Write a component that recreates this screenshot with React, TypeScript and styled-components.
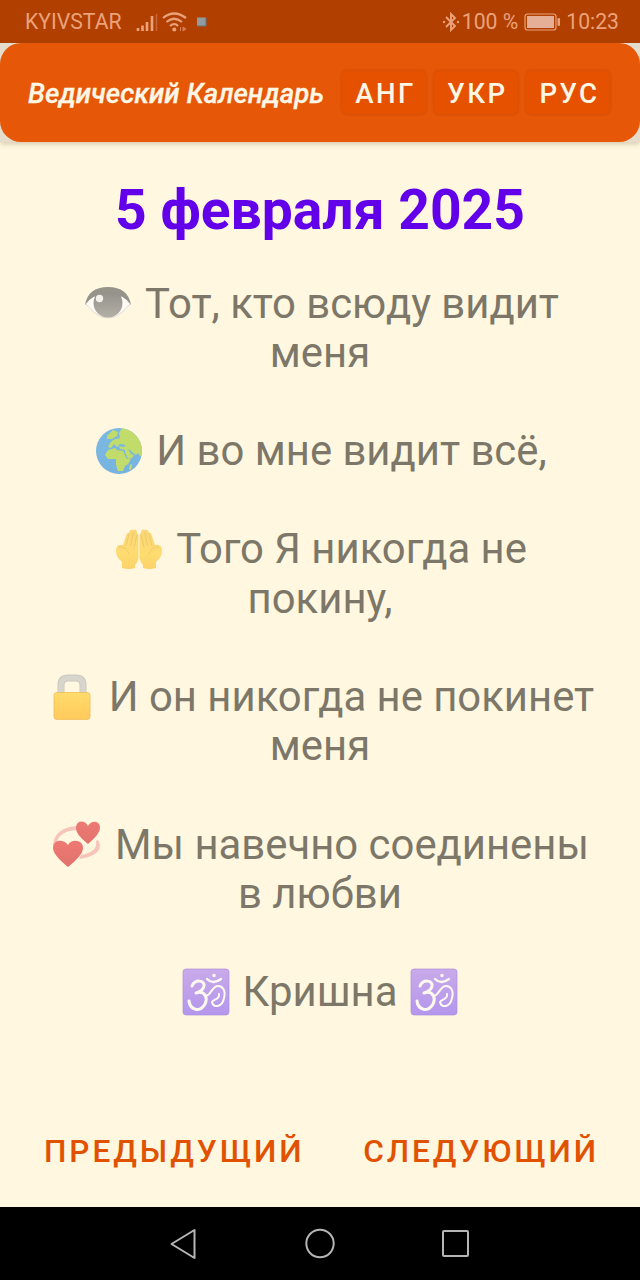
import React from "react";
import styled, { createGlobalStyle } from "styled-components";

const GlobalStyle = createGlobalStyle`
  * { box-sizing: border-box; }
  body { margin: 0; background: #fff7e0; }
  svg { display: block; flex: none; }
`;

const Screen = styled.div`
  width: 640px;
  height: 1280px;
  display: flex;
  flex-direction: column;
  overflow: hidden;
  background: #fff7e0;
  font-family: Roboto, sans-serif;
`;

const StatusBar = styled.div`
  height: 43px;
  flex: none;
  display: flex;
  align-items: center;
  padding: 0 21px 0 25px;
  background: #b03f00;
  color: #eba27c;
  font-size: 21.2px;
`;

const StatusText = styled.span<{ $left?: number }>`
  margin-left: ${(p) => p.$left ?? 0}px;
  white-space: pre;
`;

const StatusIcon = styled.svg<{ $left?: number }>`
  margin-left: ${(p) => p.$left ?? 0}px;
`;

const Spacer = styled.div`
  flex: 1;
`;

const HeaderWrap = styled.div`
  height: 99px;
  flex: none;
  background: #e6dccb;
  box-shadow: 0 2px 5px rgba(110, 90, 50, 0.28);
`;

const Header = styled.header`
  height: 99px;
  display: flex;
  align-items: center;
  padding: 0 28px;
  border-radius: 21px;
  background: #e65708;
`;

const Title = styled.h1`
  margin: 2px 0 0;
  width: 314px;
  flex: none;
  color: #fff7e6;
  font-size: 27.65px;
  font-weight: 500;
  font-style: italic;
  -webkit-text-stroke: 0.3px #fff7e6;
  white-space: nowrap;
`;

const Languages = styled.div`
  display: flex;
  gap: 8px;
`;

const LanguageButton = styled.button`
  width: 84px;
  height: 43px;
  padding: 2px 0 0 3px;
  border: 0;
  border-radius: 5px;
  background: #e65100;
  box-shadow: 0 0 3px rgba(150, 45, 0, 0.4);
  color: #fff7e6;
  font: 500 27.6px Roboto, sans-serif;
  letter-spacing: 2.5px;
`;

const Content = styled.main`
  flex: 1;
  display: flex;
  flex-direction: column;
`;

const DateHeading = styled.h2`
  margin: 35px 0 0;
  height: 66px;
  line-height: 66px;
  text-align: center;
  color: #6200ea;
  font-size: 55.2px;
  font-weight: 700;
`;

const Verses = styled.div`
  margin-top: 35.5px;
  display: flex;
  flex-direction: column;
  gap: 49.2px;
`;

const Verse = styled.div`
  display: flex;
  flex-direction: column;
`;

const Line = styled.div<{ $shift?: number }>`
  height: 49.2px;
  display: flex;
  align-items: center;
  justify-content: center;
  gap: 13px;
  padding-left: ${(p) => p.$shift ?? 0}px;
  color: #7c7768;
  font-size: 41.85px;
  line-height: 49.2px;
  white-space: nowrap;
`;

const Words = styled.span``;

const Pager = styled.nav`
  margin-top: auto;
  height: 112px;
  display: flex;
  justify-content: space-between;
  padding: 0 41px 0 44px;
`;

const PagerButton = styled.button`
  padding: 0;
  border: 0;
  background: none;
  color: #e15200;
  font: 500 31.6px Roboto, sans-serif;
  letter-spacing: 2.9px;
`;

const NavigationBar = styled.footer`
  height: 73px;
  flex: none;
  display: flex;
  align-items: center;
  justify-content: center;
  gap: 106px;
  background: #000;
`;

const Eye = () => (
  <svg width="48" height="48" viewBox="0 0 48 48">
    <defs>
      <linearGradient id="iris" x1="0" y1="0" x2="0" y2="1">
        <stop offset="0" stopColor="#8f8d86" />
        <stop offset="1" stopColor="#b3b0a7" />
      </linearGradient>
    </defs>
    <path d="M1 25Q11 9 24 9T47 25Q37 39 24 39T1 25Z" fill="#fffdf6" />
    <path d="M2 25Q13 39 24 39T46 25" fill="none" stroke="#dedacd" />
    <circle cx="24" cy="24" r="14.500" fill="url(#iris)" />
    <path d="M1 26Q4 8 24 8T47 26Q40 15 24 15T1 26Z" fill="#96938b" />
    <circle cx="15.500" cy="19.500" r="3.700" fill="#f3f1e9" />
  </svg>
);

const Globe = () => (
  <svg width="48" height="48" viewBox="0 0 48 48">
    <defs>
      <linearGradient id="sea" x1="0" y1="0" x2="0" y2="1">
        <stop offset="0" stopColor="#7cb9e2" />
        <stop offset="1" stopColor="#76b3de" />
      </linearGradient>
      <clipPath id="disc"><circle cx="24" cy="24" r="23" /></clipPath>
    </defs>
    <circle cx="24" cy="24" r="23" fill="url(#sea)" />
    <g clipPath="url(#disc)" fill="#c2dc6b">
      <path d="M24 6L27 1L36 2L44 10L48 20V28L45 29L43 26L41 28L38 26L35 23L33 22L36 27L39 28L37 31L33 32L30 25L30 23L25 22L24 19L29 20L31 18L25 17L22 20L19 17L16 21L13 20L15 16L18 13L21 12L25 11Z" />
      <path d="M12 9L18 3L23 5L22 9L17 12L12 12Z" />
      <path d="M13 23L20 21L22 23L28 24L32 32H36L33 37L30 39L28 44H23L21 38L21 32L13 32L10 28Z" />
      <path d="M35 38l2-1-1 6-2-1Z" />
    </g>
  </svg>
);

const Palms = () => (
  <svg width="48" height="48" viewBox="0 0 48 48">
    <defs>
      <linearGradient id="skin" x1="0" y1="0" x2="0" y2="1">
        <stop offset="0" stopColor="#f9d678" />
        <stop offset=".6" stopColor="#ffdc70" />
        <stop offset="1" stopColor="#fad269" />
      </linearGradient>
      <g id="palm">
        <path d="M7 43V37Q1 32 1 26Q1 20 5 20L8 20L11 11Q12 7 14 8Q15 4 18 5Q22 3 22 8Q24 9 23.500 15V33Q23 37 20 40V43Q13 45 7 43Z" fill="url(#skin)" />
        <path d="M14 9L11 21M18.500 7L15.500 21M22 10L19 22M4 22Q11 21 14 29" fill="none" stroke="#edc767" strokeWidth=".9" />
      </g>
    </defs>
    <use href="#palm" />
    <use href="#palm" transform="matrix(-1 0 0 1 48 0)" />
  </svg>
);

const Lock = () => (
  <svg width="48" height="48" viewBox="0 0 48 48">
    <defs>
      <linearGradient id="brass" x1="0" y1="0" x2="0" y2="1">
        <stop offset="0" stopColor="#ffdc6c" />
        <stop offset="1" stopColor="#ffc95b" />
      </linearGradient>
    </defs>
    <path d="M13 21V12Q13 5 20 5H28Q35 5 35 12V21" fill="none" stroke="#cbc8c0" strokeWidth="7" />
    <path d="M13 21V12Q13 5 20 5H28Q35 5 35 12V21" fill="none" stroke="#d8d5cc" strokeWidth="5" />
    <rect x="6" y="19.500" width="36" height="27" rx="3" fill="url(#brass)" stroke="#f0bf5a" strokeWidth=".8" />
  </svg>
);

const Hearts = () => (
  <svg width="50" height="48" viewBox="0 0 50 48">
    <defs>
      <linearGradient id="heart" x1="0" y1="0" x2="0" y2="1">
        <stop offset="0" stopColor="#ee7972" />
        <stop offset="1" stopColor="#e0736d" />
      </linearGradient>
    </defs>
    <path d="M1 25C2 13 11 7 25 6V10C12 11 6 15 5 23ZM46 20Q51 28 43 34Q36 38 27 39L29 35Q46 32 44 21Z" fill="#f6c4b9" />
    <path d="M36 24Q23 14 24 7C25 0 33 0 36 6C39 0 48 0 48 8Q48 14 36 24Z" fill="url(#heart)" />
    <path d="M16 47Q1 35 1 28C1 19 12 19 16 25C20 18 32 20 31 29Q30 36 16 47Z" fill="url(#heart)" />
  </svg>
);

const Om = () => (
  <svg width="48" height="48" viewBox="0 0 48 48">
    <defs>
      <linearGradient id="violet" x1="0" y1="0" x2="0" y2="1">
        <stop offset="0" stopColor="#c9aae9" />
        <stop offset="1" stopColor="#b496ed" />
      </linearGradient>
    </defs>
    <rect x="1" y="1" width="46" height="46" rx="3" fill="url(#violet)" stroke="#ad91dc" strokeWidth=".7" />
    <g fill="none" stroke="#fffaf0" strokeLinecap="round" strokeLinejoin="round">
      <path d="M10 18C13 11 23 12 22 18Q21 23 14 25C23 22 26 30 23 36C18 45 8 42 7 33" strokeWidth="3" />
      <path d="M22 27C29 30 29 18 36 18C41 18 44 23 42 30C40 40 31 40 30 34C31 31 38 32 37 26" strokeWidth="2" />
      <path d="M25 11Q31 17 39 11" strokeWidth="2.300" />
      <circle cx="32" cy="7.500" r="1" fill="#fffaf0" strokeWidth="1.500" />
    </g>
  </svg>
);

export default function App() {
  return (
    <Screen>
      <GlobalStyle />
      <StatusBar>
        <StatusText>KYIVSTAR</StatusText>
        <StatusIcon $left={14} width="76" height="24" viewBox="0 0 76 24">
          <path d="M2 18v3M6.500 15.500v5.500M11 12v9M16 6v15" stroke="#eba27c" strokeWidth="2.600" />
          <path d="M20.500 4v17" stroke="#c96537" strokeWidth="1.500" />
          <g fill="none" stroke="#eba27c" strokeWidth="2.200">
            <path d="M27 8Q38-1 50 8M30.500 12Q38 5.500 46 12M34 16Q38.500 12 42 16" />
          </g>
          <circle cx="38.300" cy="19.500" r="2" fill="#eba27c" />
          <path d="M44.500 17v4M47 17l3 2-3 2z" stroke="#d87d52" fill="#d87d52" />
          <rect x="61" y="7.500" width="9" height="8.500" fill="#929ba1" />
          <path d="M61 16h9V8" fill="none" stroke="#65727b" />
        </StatusIcon>
        <Spacer />
        <StatusIcon width="18" height="22" viewBox="0 0 18 22">
          <path d="M4 6L13 15 9 19V3L13 7 4 16" fill="none" stroke="#eba27c" strokeWidth="1.900" />
          <circle cx="2" cy="11" r="1.200" fill="#eba27c" />
          <circle cx="16" cy="11" r="1.200" fill="#eba27c" />
        </StatusIcon>
        <StatusText $left={2}>100 %</StatusText>
        <StatusIcon $left={6} width="36" height="18" viewBox="0 0 36 18">
          <rect x="1" y="1" width="31" height="16" rx="2.500" fill="none" stroke="#eba27c" strokeWidth="1.200" />
          <rect x="3" y="3" width="27" height="12" fill="#e4af96" />
          <rect x="33.500" y="5" width="2.500" height="8" rx="1" fill="#eba27c" />
        </StatusIcon>
        <StatusText $left={6}>10:23</StatusText>
      </StatusBar>
      <HeaderWrap>
        <Header>
          <Title>Ведический Календарь</Title>
          <Languages>
            <LanguageButton>АНГ</LanguageButton>
            <LanguageButton>УКР</LanguageButton>
            <LanguageButton>РУС</LanguageButton>
          </Languages>
        </Header>
      </HeaderWrap>
      <Content>
        <DateHeading>5 февраля 2025</DateHeading>
        <Verses>
          <Verse>
            <Line $shift={3}><Eye /><Words>Тот, кто всюду видит</Words></Line>
            <Line><Words>меня</Words></Line>
          </Verse>
          <Verse>
            <Line $shift={2}><Globe /><Words>И во мне видит всё,</Words></Line>
          </Verse>
          <Verse>
            <Line $shift={2}><Palms /><Words>Того Я никогда не</Words></Line>
            <Line><Words>покину,</Words></Line>
          </Verse>
          <Verse>
            <Line $shift={2}><Lock /><Words>И он никогда не покинет</Words></Line>
            <Line><Words>меня</Words></Line>
          </Verse>
          <Verse>
            <Line $shift={1}><Hearts /><Words>Мы навечно соединены</Words></Line>
            <Line><Words>в любви</Words></Line>
          </Verse>
          <Verse>
            <Line><Om /><Words>Кришна</Words><Om /></Line>
          </Verse>
        </Verses>
        <Pager>
          <PagerButton>ПРЕДЫДУЩИЙ</PagerButton>
          <PagerButton>СЛЕДУЮЩИЙ</PagerButton>
        </Pager>
      </Content>
      <NavigationBar>
        <svg width="30" height="32" viewBox="0 0 30 32">
          <path d="M2.500 16L25.500 2V30Z" fill="none" stroke="#b5b5b5" strokeWidth="2" strokeLinejoin="round" />
        </svg>
        <svg width="30" height="32" viewBox="0 0 30 32">
          <circle cx="15" cy="15.500" r="13.700" fill="none" stroke="#b5b5b5" strokeWidth="2" />
        </svg>
        <svg width="30" height="32" viewBox="0 0 30 32">
          <rect x="2" y="3" width="25" height="25" rx="1" fill="none" stroke="#b5b5b5" strokeWidth="2" />
        </svg>
      </NavigationBar>
    </Screen>
  );
}
